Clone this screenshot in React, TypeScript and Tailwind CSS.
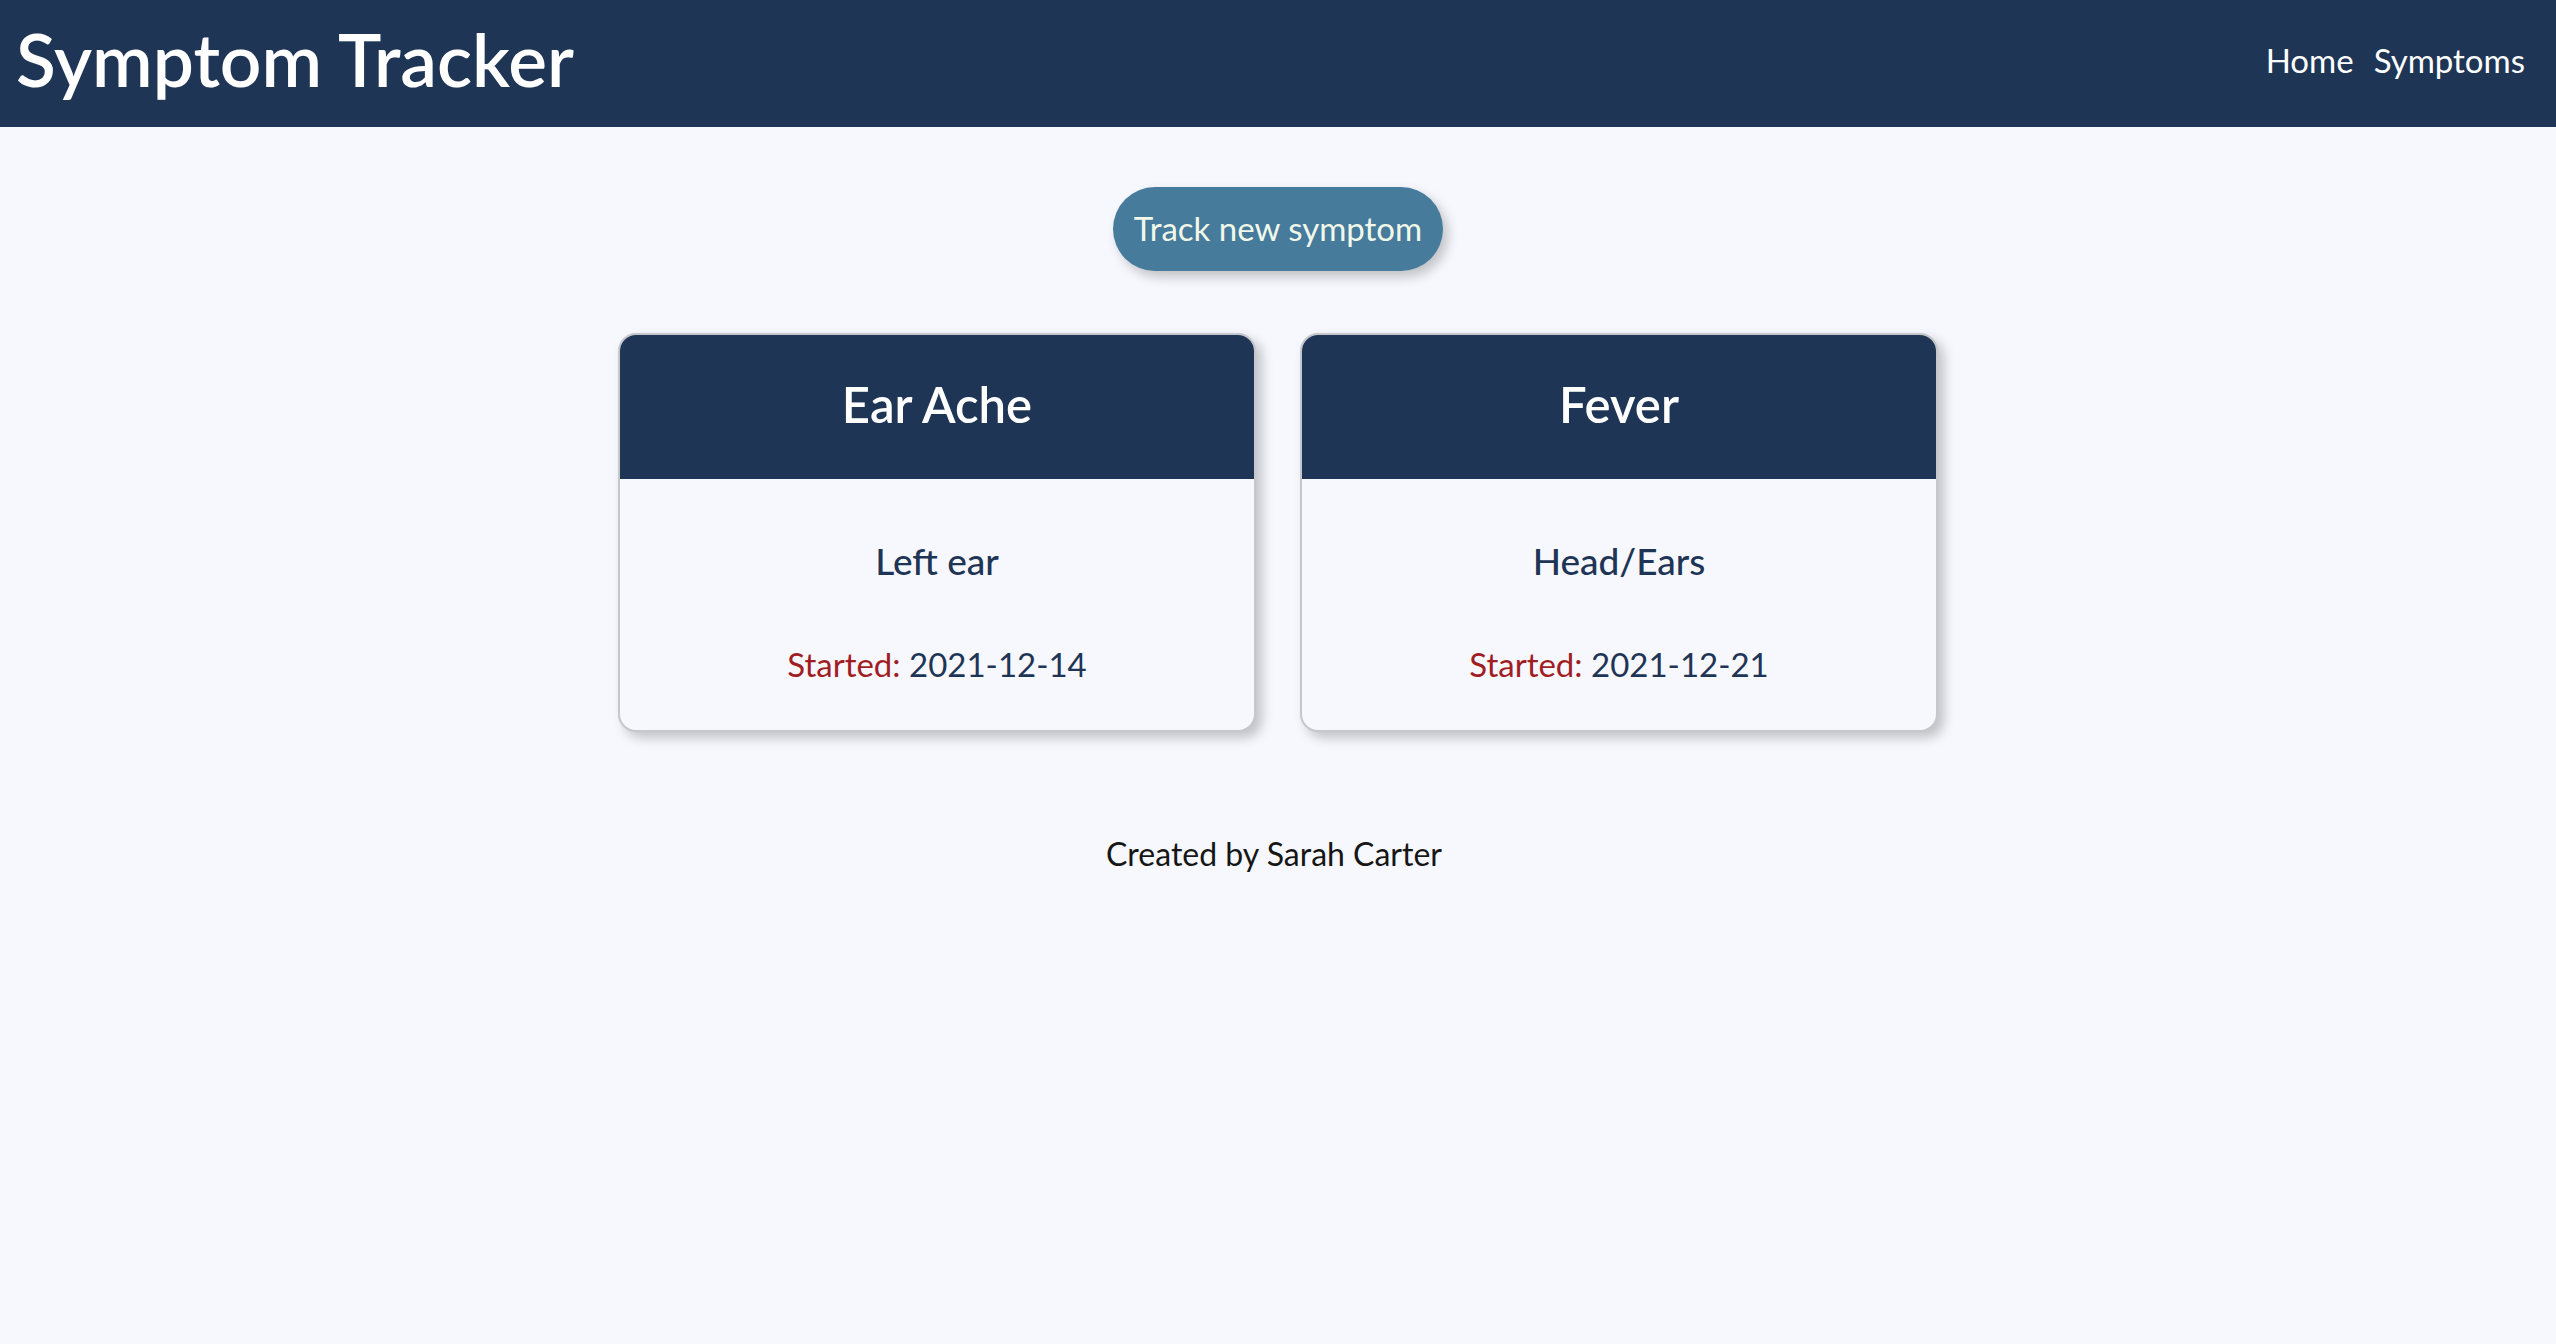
import React from "react";

interface Symptom {
  name: string;
  location: string;
  started: string;
}

const symptoms: Symptom[] = [
  { name: "Ear Ache", location: "Left ear", started: "2021-12-14" },
  { name: "Fever", location: "Head/Ears", started: "2021-12-21" },
];

function SymptomCard({ symptom }: { symptom: Symptom }) {
  return (
    <div className="w-[638px] overflow-hidden rounded-[18px] border-2 border-[#c6c7cb] bg-[#f7f8fd] shadow-[6px_6px_12px_rgba(0,0,0,0.22)]">
      <div className="flex h-[144px] items-center justify-center bg-[#1e3556] pb-[4px]">
        <h2 className="text-[49px] font-semibold text-white">{symptom.name}</h2>
      </div>
      <div className="flex flex-col items-center pt-[57px] pb-[44px] gap-[56px]">
        <p className="text-[37px] font-medium leading-[50px] text-[#1e3556]">{symptom.location}</p>
        <p className="text-[33px] leading-[44px] text-[#1e3556]">
          <span className="text-[#a11d24]">Started:</span> {symptom.started}
        </p>
      </div>
    </div>
  );
}

export default function App() {
  return (
    <div className="min-h-screen bg-[#f7f8fd]" style={{ fontFamily: "Lato, 'Open Sans', sans-serif" }}>
      <header className="flex h-[127px] items-center justify-between bg-[#1e3556] pl-[16px] pr-[31px]">
        <h1 className="mb-[8px] text-[73px] font-semibold leading-none text-white">Symptom Tracker</h1>
        <nav className="mb-[6px] flex gap-[20px] text-[33px] text-white">
          <a href="#">Home</a>
          <a href="#">Symptoms</a>
        </nav>
      </header>

      <main className="flex flex-col items-center">
        <button className="mt-[60px] h-[84px] rounded-full bg-[#467b9c] px-[21px] text-[33px] text-[#f1f8ea] shadow-[5px_6px_12px_rgba(0,0,0,0.22)]">
          Track new symptom
        </button>

        <div className="mt-[62px] flex gap-[44px]">
          {symptoms.map((s) => (
            <SymptomCard key={s.name} symptom={s} />
          ))}
        </div>

        <p className="mt-[98px] mr-[8px] text-[32px] font-normal text-[#161616]">Created by Sarah Carter</p>
      </main>
    </div>
  );
}
